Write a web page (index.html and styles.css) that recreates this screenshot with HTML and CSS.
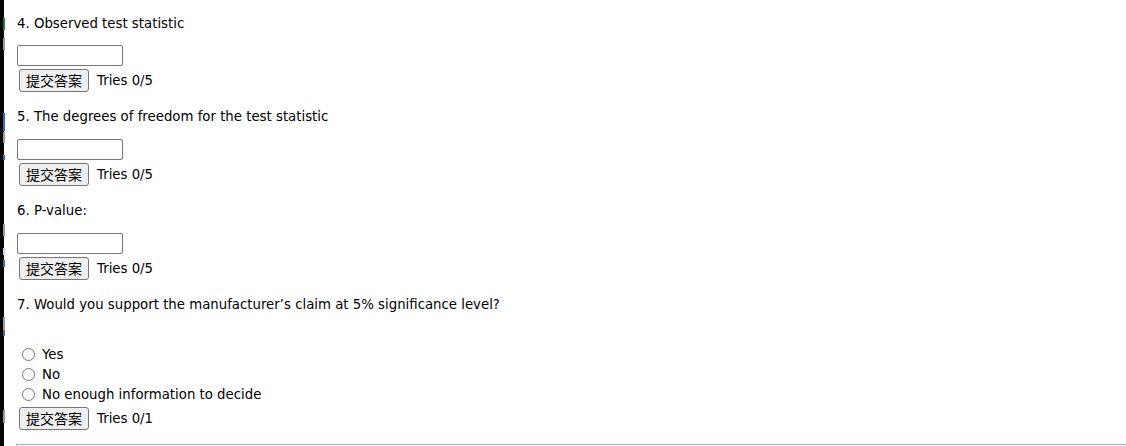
FILE: index.html
```html
<!DOCTYPE html>
<html lang="zh">
<head>
<meta charset="utf-8">
<title>Quiz</title>
<link rel="stylesheet" href="styles.css">
</head>
<body>
<div class="page">
  <aside class="edge">
    <span class="mark mark-green" style="top:18px;height:12px"></span>
    <span class="mark mark-grey" style="top:38px;height:12px"></span>
    <span class="mark mark-blue" style="top:113px;height:18px"></span>
    <span class="mark mark-grey" style="top:132px;height:11px"></span>
    <span class="mark mark-blue" style="top:155px;height:5px"></span>
    <span class="mark mark-grey" style="top:224px;height:12px"></span>
    <span class="mark mark-light" style="top:248px;height:7px"></span>
    <span class="mark mark-blue" style="top:260px;height:7px"></span>
    <span class="mark mark-grey" style="top:317px;height:13px"></span>
    <span class="mark mark-blue" style="top:330px;height:6px"></span>
    <span class="mark mark-grey" style="top:410px;height:13px"></span>
  </aside>
  <main class="content">
    <div class="q">
      <p class="qt">4. Observed test statistic</p>
      <input class="answer" type="text">
      <div class="row"><button class="submit" type="button">提交答案</button><span class="tries">Tries 0/5</span></div>
    </div>
    <div class="q">
      <p class="qt">5. The degrees of freedom for the test statistic</p>
      <input class="answer" type="text">
      <div class="row"><button class="submit" type="button">提交答案</button><span class="tries">Tries 0/5</span></div>
    </div>
    <div class="q">
      <p class="qt">6. P-value:</p>
      <input class="answer" type="text">
      <div class="row"><button class="submit" type="button">提交答案</button><span class="tries">Tries 0/5</span></div>
    </div>
    <div class="q">
      <p class="qt qt-gap">7. Would you support the manufacturer’s claim at 5% significance level?</p>
      <label class="opt"><input class="radio" type="radio" name="q7"><span>Yes</span></label>
      <label class="opt"><input class="radio" type="radio" name="q7"><span>No</span></label>
      <label class="opt"><input class="radio" type="radio" name="q7"><span>No enough information to decide</span></label>
      <div class="row"><button class="submit" type="button">提交答案</button><span class="tries">Tries 0/1</span></div>
    </div>
    <div class="next-box"></div>
  </main>
</div>
</body>
</html>
```

FILE: styles.css
```css
html, body {
  margin: 0;
  padding: 0;
  background: #ffffff;
}

body {
  font-family: "DejaVu Sans", Verdana, sans-serif;
  font-size: 13.3px;
  color: #000000;
  overflow: hidden;
}

.page {
  display: flex;
  min-height: 446px;
}

.edge {
  position: relative;
  width: 4px;
  flex: 0 0 4px;
  background: #050505;
}

.mark {
  position: absolute;
  left: 3px;
  width: 2px;
  display: block;
}

.mark-green { background: #1f7a4a; }
.mark-grey { background: #9a9a9a; }
.mark-blue { background: #2e6fb0; }
.mark-light { background: #c9d6e6; }

.content {
  flex: 1;
  padding-left: 13px;
  min-width: 0;
}

.q {
  padding-top: 16px;
  padding-bottom: 2px;
}

.qt {
  margin: 0 0 14px;
  line-height: 15px;
}

.q:not(:first-child) .qt {
  margin-top: -1px;
  margin-bottom: 15px;
}

.qt-gap {
  margin-bottom: 31px;
}

.q .qt.qt-gap {
  margin-bottom: 32px;
}

.answer {
  display: block;
  box-sizing: border-box;
  width: 106px;
  height: 21px;
  margin: 0;
  padding: 1px 2px;
  border: 1px solid #767676;
  border-radius: 2px;
  background: #ffffff;
  font: 13px "DejaVu Sans", sans-serif;
}

.row {
  display: flex;
  align-items: center;
  margin-top: 3px;
  height: 23px;
}

.submit {
  box-sizing: border-box;
  height: 23px;
  margin: 0 8px 0 2px;
  padding: 0 6px;
  border: 1px solid #767676;
  border-radius: 3px;
  background: #efefef;
  color: #000000;
  font-family: "Noto Sans CJK SC", sans-serif;
  font-size: 14px;
  line-height: 19px;
}

.tries {
  line-height: 15px;
}

.opt {
  display: flex;
  align-items: center;
  height: 20px;
}

.radio {
  width: 13px;
  height: 13px;
  margin: 0 7px 0 5px;
  flex: 0 0 13px;
}

.next-box {
  margin-top: 12px;
  margin-left: -1px;
  height: 20px;
  border-top: 1px solid #8db9f0;
  border-left: 1px solid #8db9f0;
  background: #f4f8fe;
}
```
